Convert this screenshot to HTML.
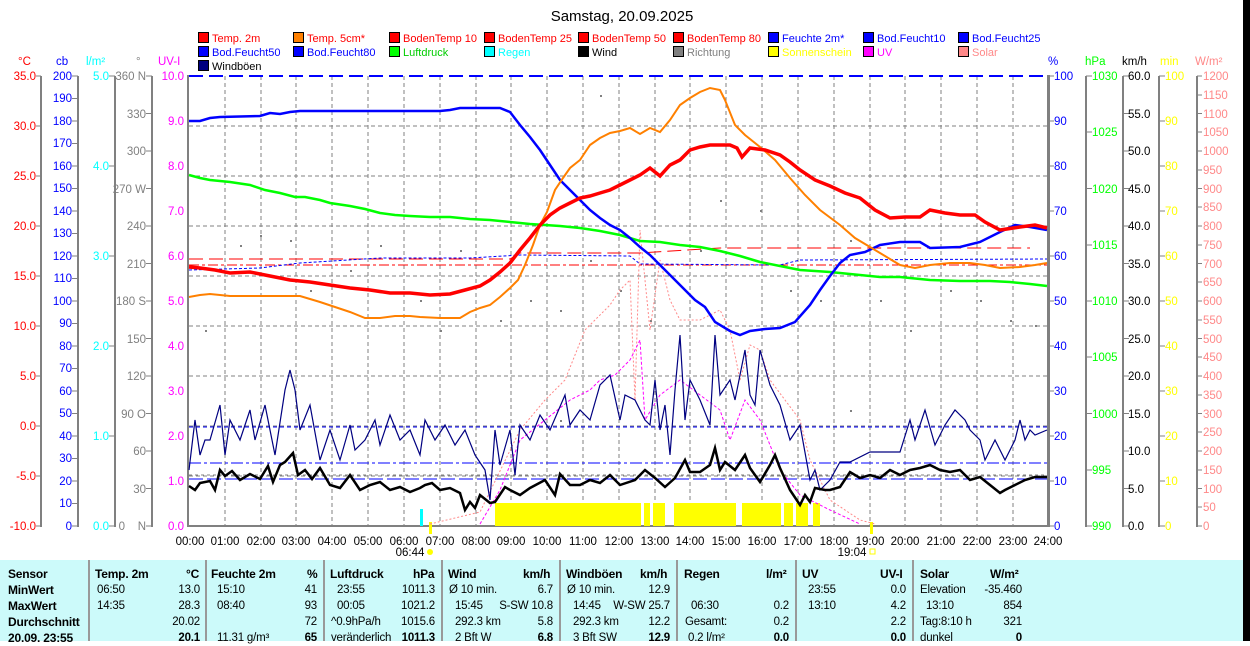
<!DOCTYPE html>
<html><head><meta charset="utf-8"><style>
body{margin:0;width:1250px;height:641px;background:#fff;overflow:hidden;font-family:"Liberation Sans",sans-serif}
svg{position:absolute;left:0;top:0}
svg text{font-family:"Liberation Sans",sans-serif;font-size:11.5px}
#tbl{position:absolute;left:0;top:560px;width:1243px;height:81px;background:#ccfafa}
#blk{position:absolute;left:1243px;top:0;width:7px;height:641px;background:#000}
.c{position:absolute;font-size:11.5px;letter-spacing:-0.2px;line-height:16px;color:#000;white-space:nowrap}
.b{font-weight:bold;font-size:12px}
.sep{position:absolute;top:0;width:2px;height:81px;background:#999}
.lg text{font-size:11px}
</style></head><body>
<svg width="1250" height="560" viewBox="0 0 1250 560">
<text x="622" y="21" text-anchor="middle" style="font-size:15px">Samstag, 20.09.2025</text>
<g class="lg">
<rect x="198.5" y="32.5" width="10" height="10" fill="#f00" stroke="#000"/><text x="212" y="42" fill="#f00">Temp. 2m</text>
<rect x="293.5" y="32.5" width="10" height="10" fill="#ff8000" stroke="#000"/><text x="307" y="42" fill="#f00">Temp. 5cm*</text>
<rect x="389.5" y="32.5" width="10" height="10" fill="#f00" stroke="#000"/><text x="403" y="42" fill="#f00">BodenTemp 10</text>
<rect x="484.5" y="32.5" width="10" height="10" fill="#f00" stroke="#000"/><text x="498" y="42" fill="#f00">BodenTemp 25</text>
<rect x="578.5" y="32.5" width="10" height="10" fill="#f00" stroke="#000"/><text x="592" y="42" fill="#f00">BodenTemp 50</text>
<rect x="673.5" y="32.5" width="10" height="10" fill="#f00" stroke="#000"/><text x="687" y="42" fill="#f00">BodenTemp 80</text>
<rect x="768.5" y="32.5" width="10" height="10" fill="#00f" stroke="#000"/><text x="782" y="42" fill="#00f">Feuchte 2m*</text>
<rect x="863.5" y="32.5" width="10" height="10" fill="#00f" stroke="#000"/><text x="877" y="42" fill="#00f">Bod.Feucht10</text>
<rect x="958.5" y="32.5" width="10" height="10" fill="#00f" stroke="#000"/><text x="972" y="42" fill="#00f">Bod.Feucht25</text>
<rect x="198.5" y="46.5" width="10" height="10" fill="#00f" stroke="#000"/><text x="212" y="56" fill="#00f">Bod.Feucht50</text>
<rect x="293.5" y="46.5" width="10" height="10" fill="#00f" stroke="#000"/><text x="307" y="56" fill="#00f">Bod.Feucht80</text>
<rect x="389.5" y="46.5" width="10" height="10" fill="#0f0" stroke="#000"/><text x="403" y="56" fill="#0c0">Luftdruck</text>
<rect x="484.5" y="46.5" width="10" height="10" fill="#0ff" stroke="#000"/><text x="498" y="56" fill="#0ff">Regen</text>
<rect x="578.5" y="46.5" width="10" height="10" fill="#000" stroke="#000"/><text x="592" y="56" fill="#000">Wind</text>
<rect x="673.5" y="46.5" width="10" height="10" fill="#808080" stroke="#000"/><text x="687" y="56" fill="#808080">Richtung</text>
<rect x="768.5" y="46.5" width="10" height="10" fill="#ff0" stroke="#000"/><text x="782" y="56" fill="#ff0">Sonnenschein</text>
<rect x="863.5" y="46.5" width="10" height="10" fill="#f0f" stroke="#000"/><text x="877" y="56" fill="#f0f">UV</text>
<rect x="958.5" y="46.5" width="10" height="10" fill="#f88" stroke="#000"/><text x="972" y="56" fill="#f88">Solar</text>
<rect x="198.5" y="60.5" width="10" height="10" fill="#000080" stroke="#000"/><text x="212" y="70" fill="#000">Windböen</text>
</g>
<text x="18" y="65" fill="#f00">°C</text><text x="56" y="65" fill="#00f">cb</text><text x="86" y="65" fill="#0ff">l/m²</text><text x="136" y="65" fill="#808080">°</text><text x="158" y="65" fill="#f0f">UV-I</text>
<text x="1048" y="65" fill="#00f">%</text><text x="1085" y="65" fill="#0f0">hPa</text><text x="1122" y="65" fill="#000">km/h</text><text x="1160" y="65" fill="#ff0">min</text><text x="1195" y="65" fill="#f88">W/m²</text>
<g stroke="#808080" stroke-width="2">
<line x1="41" y1="76" x2="41" y2="527"/><line x1="78" y1="76" x2="78" y2="527"/><line x1="115" y1="76" x2="115" y2="527"/><line x1="152" y1="76" x2="152" y2="527"/>
<line x1="1086" y1="76" x2="1086" y2="527"/><line x1="1123" y1="76" x2="1123" y2="527"/><line x1="1159" y1="76" x2="1159" y2="527"/><line x1="1197" y1="76" x2="1197" y2="527"/>
</g>
<rect x="187" y="75" width="2" height="452" fill="#808080"/><rect x="1047" y="75" width="3" height="452" fill="#808080"/>
<g stroke="#808080" stroke-dasharray="4,3" stroke-width="1">
<path d="M189 126H1047M189 176H1047M189 226H1047M189 276H1047M189 326H1047M189 376H1047M189 426H1047M189 476H1047"/>
<path d="M225 76V526M261 76V526M296 76V526M332 76V526M368 76V526M404 76V526M440 76V526M476 76V526M511 76V526M547 76V526M583 76V526M619 76V526M655 76V526M690 76V526M726 76V526M762 76V526M798 76V526M834 76V526M870 76V526M905 76V526M941 76V526M977 76V526M1013 76V526"/>
</g>
<line x1="189" y1="526" x2="1047" y2="526" stroke="#808080" stroke-width="2"/>
<line x1="189" y1="76" x2="1047" y2="76" stroke="#00f" stroke-width="2" stroke-dasharray="14,6"/>
<g fill="#f00" text-anchor="end">
<text x="36" y="80">35.0</text><text x="36" y="130">30.0</text><text x="36" y="180">25.0</text><text x="36" y="230">20.0</text><text x="36" y="280">15.0</text><text x="36" y="330">10.0</text><text x="36" y="380">5.0</text><text x="36" y="430">0.0</text><text x="36" y="480">-5.0</text><text x="36" y="530">-10.0</text>
</g>
<g stroke="#808080"><path d="M36 76h5M36 126h5M36 176h5M36 226h5M36 276h5M36 326h5M36 376h5M36 426h5M36 476h5M36 526h5"/>
<path d="M72 76h6M72 98.5h6M72 121h6M72 143.5h6M72 166h6M72 188.5h6M72 211h6M72 233.5h6M72 256h6M72 278.5h6M72 301h6M72 323.5h6M72 346h6M72 368.5h6M72 391h6M72 413.5h6M72 436h6M72 458.5h6M72 481h6M72 503.5h6M72 526h6"/>
<path d="M109 76h6M109 166h6M109 256h6M109 346h6M109 436h6M109 526h6"/>
<path d="M146 76h6M146 113.5h6M146 151h6M146 188.5h6M146 226h6M146 263.5h6M146 301h6M146 338.5h6M146 376h6M146 413.5h6M146 451h6M146 488.5h6M146 526h6"/>
<path d="M1049 76h5M1049 121h5M1049 166h5M1049 211h5M1049 256h5M1049 301h5M1049 346h5M1049 391h5M1049 436h5M1049 481h5M1049 526h5"/>
<path d="M1086 76h6M1086 132h6M1086 188.5h6M1086 245h6M1086 301h6M1086 357h6M1086 413.5h6M1086 470h6M1086 526h6"/>
<path d="M1123 76h6M1123 113.5h6M1123 151h6M1123 188.5h6M1123 226h6M1123 263.5h6M1123 301h6M1123 338.5h6M1123 376h6M1123 413.5h6M1123 451h6M1123 488.5h6M1123 526h6"/>
<path d="M1159 76h6M1159 121h6M1159 166h6M1159 211h6M1159 256h6M1159 301h6M1159 346h6M1159 391h6M1159 436h6M1159 481h6M1159 526h6"/>
</g>
<g fill="#00f" text-anchor="end">
<text x="72" y="80">200</text><text x="72" y="102">190</text><text x="72" y="125">180</text><text x="72" y="147">170</text><text x="72" y="170">160</text><text x="72" y="192">150</text><text x="72" y="215">140</text><text x="72" y="237">130</text><text x="72" y="260">120</text><text x="72" y="282">110</text><text x="72" y="305">100</text><text x="72" y="327">90</text><text x="72" y="350">80</text><text x="72" y="372">70</text><text x="72" y="395">60</text><text x="72" y="417">50</text><text x="72" y="440">40</text><text x="72" y="462">30</text><text x="72" y="485">20</text><text x="72" y="507">10</text><text x="72" y="530">0</text>
</g>
<g fill="#0ff" text-anchor="end"><text x="109" y="80">5.0</text><text x="109" y="170">4.0</text><text x="109" y="260">3.0</text><text x="109" y="350">2.0</text><text x="109" y="440">1.0</text><text x="109" y="530">0.0</text></g>
<g fill="#808080" text-anchor="end">
<text x="146" y="80">360 N</text><text x="146" y="118">330</text><text x="146" y="155">300</text><text x="146" y="193">270 W</text><text x="146" y="230">240</text><text x="146" y="268">210</text><text x="146" y="305">180 S</text><text x="146" y="343">150</text><text x="146" y="380">120</text><text x="146" y="418">90 O</text><text x="146" y="455">60</text><text x="146" y="493">30</text><text x="146" y="530">N</text>
<text x="125" y="530">0</text>
</g>
<g fill="#f0f" text-anchor="end">
<text x="184" y="80">10.0</text><text x="184" y="125">9.0</text><text x="184" y="170">8.0</text><text x="184" y="215">7.0</text><text x="184" y="260">6.0</text><text x="184" y="305">5.0</text><text x="184" y="350">4.0</text><text x="184" y="395">3.0</text><text x="184" y="440">2.0</text><text x="184" y="485">1.0</text><text x="184" y="530">0.0</text>
</g>
<g fill="#00f"><text x="1054" y="80">100</text><text x="1054" y="125">90</text><text x="1054" y="170">80</text><text x="1054" y="215">70</text><text x="1054" y="260">60</text><text x="1054" y="305">50</text><text x="1054" y="350">40</text><text x="1054" y="395">30</text><text x="1054" y="440">20</text><text x="1054" y="485">10</text><text x="1054" y="530">0</text></g>
<g fill="#0f0"><text x="1092" y="80">1030</text><text x="1092" y="136">1025</text><text x="1092" y="193">1020</text><text x="1092" y="249">1015</text><text x="1092" y="305">1010</text><text x="1092" y="361">1005</text><text x="1092" y="418">1000</text><text x="1092" y="474">995</text><text x="1092" y="530">990</text></g>
<g fill="#000"><text x="1128" y="80">60.0</text><text x="1128" y="118">55.0</text><text x="1128" y="155">50.0</text><text x="1128" y="193">45.0</text><text x="1128" y="230">40.0</text><text x="1128" y="268">35.0</text><text x="1128" y="305">30.0</text><text x="1128" y="343">25.0</text><text x="1128" y="380">20.0</text><text x="1128" y="418">15.0</text><text x="1128" y="455">10.0</text><text x="1128" y="493">5.0</text><text x="1128" y="530">0.0</text></g>
<g fill="#ff0"><text x="1165" y="80">100</text><text x="1165" y="125">90</text><text x="1165" y="170">80</text><text x="1165" y="215">70</text><text x="1165" y="260">60</text><text x="1165" y="305">50</text><text x="1165" y="350">40</text><text x="1165" y="395">30</text><text x="1165" y="440">20</text><text x="1165" y="485">10</text><text x="1165" y="530">0</text></g>
<g fill="#f88">
<text x="1203" y="80">1200</text><text x="1203" y="99">1150</text><text x="1203" y="118">1100</text><text x="1203" y="136">1050</text><text x="1203" y="155">1000</text><text x="1203" y="174">950</text><text x="1203" y="193">900</text><text x="1203" y="211">850</text><text x="1203" y="230">800</text><text x="1203" y="249">750</text><text x="1203" y="268">700</text><text x="1203" y="286">650</text><text x="1203" y="305">600</text><text x="1203" y="324">550</text><text x="1203" y="343">500</text><text x="1203" y="361">450</text><text x="1203" y="380">400</text><text x="1203" y="399">350</text><text x="1203" y="418">300</text><text x="1203" y="436">250</text><text x="1203" y="455">200</text><text x="1203" y="474">150</text><text x="1203" y="493">100</text><text x="1203" y="511">50</text><text x="1203" y="530">0</text>
</g>
<g stroke="#808080"><path d="M1197 76h5M1197 95h5M1197 113.5h5M1197 132h5M1197 151h5M1197 170h5M1197 188.5h5M1197 207h5M1197 226h5M1197 245h5M1197 263.5h5M1197 282h5M1197 301h5M1197 320h5M1197 338.5h5M1197 357h5M1197 376h5M1197 395h5M1197 413.5h5M1197 432h5M1197 451h5M1197 470h5M1197 488.5h5M1197 507h5M1197 526h5"/></g>
<g fill="#ff0"><rect x="495" y="503" width="146" height="23"/><rect x="644" y="503" width="6" height="23"/><rect x="653" y="503" width="12" height="23"/><rect x="674" y="503" width="62" height="23"/><rect x="742" y="503" width="39" height="23"/><rect x="784" y="503" width="9" height="23"/><rect x="796" y="503" width="12" height="23"/><rect x="813" y="503" width="7" height="23"/>
<rect x="429" y="522" width="3" height="12"/><rect x="870" y="522" width="3" height="12"/></g>
<rect x="420" y="509" width="3" height="17" fill="#0ff"/>
<g fill="#808080">
<rect x="205" y="330" width="2" height="2"/><rect x="240" y="245" width="2" height="2"/><rect x="260" y="235" width="2" height="2"/><rect x="290" y="240" width="2" height="2"/><rect x="310" y="290" width="2" height="2"/><rect x="350" y="270" width="2" height="2"/><rect x="380" y="245" width="2" height="2"/><rect x="420" y="300" width="2" height="2"/><rect x="460" y="250" width="2" height="2"/><rect x="500" y="320" width="2" height="2"/><rect x="530" y="300" width="2" height="2"/><rect x="560" y="310" width="2" height="2"/><rect x="590" y="260" width="2" height="2"/><rect x="600" y="95" width="2" height="2"/><rect x="620" y="290" width="2" height="2"/><rect x="650" y="320" width="2" height="2"/><rect x="700" y="250" width="2" height="2"/><rect x="720" y="200" width="2" height="2"/><rect x="760" y="210" width="2" height="2"/><rect x="790" y="290" width="2" height="2"/><rect x="820" y="300" width="2" height="2"/><rect x="850" y="240" width="2" height="2"/><rect x="880" y="300" width="2" height="2"/><rect x="910" y="330" width="2" height="2"/><rect x="950" y="290" width="2" height="2"/><rect x="980" y="300" width="2" height="2"/><rect x="1010" y="320" width="2" height="2"/><rect x="1035" y="325" width="2" height="2"/><rect x="850" y="410" width="2" height="2"/><rect x="440" y="330" width="2" height="2"/><rect x="560" y="420" width="2" height="2"/>
</g>
<path d="M189 427H1047" stroke="#00f" stroke-dasharray="4,3"/>
<path d="M189 463H1047" stroke="#00f" stroke-dasharray="12,3,3,3"/>
<path d="M189 479H1047" stroke="#00f" stroke-dasharray="14,4"/>
<path d="M189 475H1047" stroke="#808080" stroke-dasharray="3,3"/>
<path d="M189 259H510L520 253H640L720 248H1030" stroke="#f00" stroke-dasharray="14,6" fill="none"/>
<path d="M189 265H1047" stroke="#f00" stroke-dasharray="10,3,3,3"/>
<path d="M189 270L260 268L300 263L380 258L470 258L520 255L630 256L640 264L780 265L800 260L1047 259" stroke="#00f" stroke-dasharray="3,2" fill="none"/>
<polyline fill="none" stroke="#f88" stroke-dasharray="2,2" points="430,524 480,512 520,430 545,400 565,380 585,330 610,305 620,290 630,280 635,400 640,230 650,330 660,260 670,300 680,320 700,320 720,310 730,330 740,380 750,345 760,350 770,380 785,400 800,420 810,460 830,500 860,520 875,524"/>
<polyline fill="none" stroke="#f0f" stroke-dasharray="3,2" points="480,524 500,490 520,440 545,420 570,400 590,390 600,380 615,375 630,360 640,340 645,420 660,395 680,380 720,410 730,440 745,400 760,420 780,470 800,495 830,510 860,524"/>
<polyline fill="none" stroke="#000080" stroke-width="1.2" points="189,470 195,420 200,455 205,440 210,440 220,405 225,455 230,420 240,440 250,410 255,440 265,405 275,455 285,390 290,370 295,390 300,430 310,405 320,460 330,430 340,460 350,425 355,450 365,440 375,420 380,445 390,415 400,440 410,430 420,455 425,420 435,440 445,425 455,445 465,430 475,455 485,470 490,500 495,430 500,465 510,430 515,475 520,425 530,440 540,415 550,430 565,395 570,425 580,410 590,420 600,385 610,375 620,420 625,395 635,400 645,420 650,425 655,380 660,430 665,405 670,455 675,390 680,335 685,420 690,380 700,400 710,425 715,335 720,395 730,380 735,400 745,350 750,395 755,405 760,350 770,385 780,405 790,440 800,425 810,480 815,470 820,490 830,480 840,462 850,462 870,452 900,452 910,420 915,440 925,410 935,445 945,425 955,410 965,420 970,430 980,440 985,460 995,440 1005,460 1015,440 1020,420 1025,440 1030,430 1035,435 1047,430"/>
<polyline fill="none" stroke="#000" stroke-width="2.5" points="189,486 195,490 200,483 210,481 215,490 220,470 225,476 232,471 240,480 250,474 260,479 268,466 273,482 280,465 285,462 293,453 298,475 305,470 312,479 320,468 330,485 340,488 350,475 360,490 370,485 380,482 390,490 400,487 410,492 420,488 425,485 432,483 440,490 450,488 460,493 465,510 470,502 475,508 480,495 490,503 495,502 505,487 510,490 520,495 530,488 545,480 555,495 560,474 570,485 580,485 590,480 600,483 610,475 620,485 635,480 645,470 655,478 665,487 675,478 685,460 690,472 700,472 710,465 715,448 720,470 725,462 735,470 745,455 750,468 755,475 760,482 770,465 775,455 780,468 790,490 800,505 805,495 810,502 815,488 825,490 830,490 840,487 850,472 860,478 870,475 880,478 890,470 900,475 910,470 920,468 930,465 940,470 950,472 960,470 970,480 980,477 990,485 1000,493 1005,490 1015,485 1025,480 1035,477 1047,477"/>
<polyline fill="none" stroke="#0f0" stroke-width="2.5" points="189,175 200,178 210,180 230,182 250,185 265,190 280,193 295,197 305,197 320,200 330,203 350,206 365,209 380,213 395,215 410,216 430,217 450,217 470,219 490,220 510,222 530,224 560,226 580,228 600,231 620,235 640,241 660,242 680,245 700,247 720,251 740,256 760,262 780,266 800,270 830,272 860,275 880,277 900,277 930,280 960,281 990,281 1010,282 1030,284 1047,286"/>
<polyline fill="none" stroke="#00f" stroke-width="2.5" points="189,121 200,121 210,118 220,117 260,116 270,113 280,114 290,112 300,111 320,111 390,111 440,111 450,110 460,108 500,108 510,112 520,125 530,137 540,150 550,165 560,180 570,190 580,200 590,210 600,218 610,225 620,230 630,238 640,247 650,255 660,265 670,275 680,285 695,300 705,307 715,322 730,331 740,335 750,331 765,329 780,328 795,322 810,305 820,290 830,276 840,263 850,255 865,252 880,245 900,242 920,242 930,248 960,247 980,242 1000,232 1015,225 1030,227 1047,230"/>
<polyline fill="none" stroke="#ff8000" stroke-width="2" points="189,297 200,295 210,294 230,296 260,296 280,296 300,296 310,299 320,302 335,307 350,312 365,318 380,318 395,316 410,316 420,317 440,318 460,318 470,312 480,308 490,305 500,297 510,288 518,280 525,265 533,245 540,225 547,212 555,190 563,178 570,168 580,160 590,145 600,138 610,133 620,131 630,128 640,134 650,128 660,132 670,120 680,105 690,98 700,92 710,88 720,90 725,100 735,125 745,135 760,147 775,160 790,178 805,195 820,210 840,225 855,238 870,247 885,256 900,265 915,268 930,265 950,263 970,263 985,265 1000,268 1020,267 1035,265 1047,263"/>
<polyline fill="none" stroke="#f00" stroke-width="3.5" points="189,267 200,268 215,270 230,273 250,272 270,276 290,280 310,282 330,285 350,288 370,290 390,293 410,293 430,295 450,294 465,290 480,286 490,280 500,272 510,263 520,250 530,238 540,225 550,215 560,208 570,203 580,198 590,196 600,193 610,190 620,185 630,180 640,175 650,168 660,176 670,165 680,160 690,150 700,147 710,145 730,145 737,148 742,157 750,148 765,150 780,155 790,162 800,170 815,180 830,186 845,193 860,198 875,210 890,218 905,217 920,217 930,210 945,213 960,215 975,215 985,222 1000,230 1020,227 1035,225 1047,228"/>
<g text-anchor="middle" fill="#000">
<text x="190" y="545">00:00</text><text x="225" y="545">01:00</text><text x="261" y="545">02:00</text><text x="296" y="545">03:00</text><text x="332" y="545">04:00</text><text x="368" y="545">05:00</text><text x="404" y="545">06:00</text><text x="440" y="545">07:00</text><text x="476" y="545">08:00</text><text x="511" y="545">09:00</text><text x="547" y="545">10:00</text><text x="583" y="545">11:00</text><text x="619" y="545">12:00</text><text x="655" y="545">13:00</text><text x="690" y="545">14:00</text><text x="726" y="545">15:00</text><text x="762" y="545">16:00</text><text x="798" y="545">17:00</text><text x="834" y="545">18:00</text><text x="870" y="545">19:00</text><text x="905" y="545">20:00</text><text x="941" y="545">21:00</text><text x="977" y="545">22:00</text><text x="1013" y="545">23:00</text><text x="1048" y="545">24:00</text>
<text x="410" y="556">06:44</text><text x="852" y="556">19:04</text>
</g>
<circle cx="430" cy="552" r="3" fill="#ff0"/><rect x="870" y="549" width="5" height="5" fill="none" stroke="#ff0"/>
</svg>
<div id="tbl">
<div class="sep" style="left:88px"></div><div class="sep" style="left:205px"></div><div class="sep" style="left:323px"></div><div class="sep" style="left:441px"></div><div class="sep" style="left:559px"></div><div class="sep" style="left:676px"></div><div class="sep" style="left:795px"></div><div class="sep" style="left:912px"></div>
<div class="c b" style="left:8px;top:6px">Sensor<br>MinWert<br>MaxWert<br>Durchschnitt<br>20.09. 23:55</div>
<div class="c b" style="left:95px;top:6px">Temp. 2m</div><div class="c b" style="left:186px;top:6px">°C</div>
<div class="c" style="left:97px;top:22px">06:50<br>14:35</div>
<div class="c" style="left:160px;top:22px;text-align:right;width:40px">13.0<br>28.3<br>20.02<br><b>20.1</b></div>
<div class="c b" style="left:211px;top:6px">Feuchte 2m</div><div class="c b" style="left:307px;top:6px">%</div>
<div class="c" style="left:217px;top:22px">15:10<br>08:40<br><br>11.31 g/m³</div>
<div class="c" style="left:280px;top:22px;text-align:right;width:37px">41<br>93<br>72<br><b>65</b></div>
<div class="c b" style="left:330px;top:6px">Luftdruck</div><div class="c b" style="left:413px;top:6px">hPa</div>
<div class="c" style="left:331px;top:22px">&nbsp;&nbsp;23:55<br>&nbsp;&nbsp;00:05<br>^0.9hPa/h<br>veränderlich</div>
<div class="c" style="left:390px;top:22px;text-align:right;width:45px">1011.3<br>1021.2<br>1015.6<br><b>1011.3</b></div>
<div class="c b" style="left:448px;top:6px">Wind</div><div class="c b" style="left:523px;top:6px">km/h</div>
<div class="c" style="left:449px;top:22px">Ø 10 min.<br>&nbsp;&nbsp;15:45<br>&nbsp;&nbsp;292.3 km<br>&nbsp;&nbsp;2 Bft W</div>
<div class="c" style="left:490px;top:22px;text-align:right;width:63px">6.7<br>S-SW 10.8<br>5.8<br><b>6.8</b></div>
<div class="c b" style="left:566px;top:6px">Windböen</div><div class="c b" style="left:640px;top:6px">km/h</div>
<div class="c" style="left:567px;top:22px">Ø 10 min.<br>&nbsp;&nbsp;14:45<br>&nbsp;&nbsp;292.3 km<br>&nbsp;&nbsp;3 Bft SW</div>
<div class="c" style="left:605px;top:22px;text-align:right;width:65px">12.9<br>W-SW 25.7<br>12.2<br><b>12.9</b></div>
<div class="c b" style="left:684px;top:6px">Regen</div><div class="c b" style="left:766px;top:6px">l/m²</div>
<div class="c" style="left:685px;top:22px"><br>&nbsp;&nbsp;06:30<br>Gesamt:<br>&nbsp;0.2 l/m²</div>
<div class="c" style="left:750px;top:22px;text-align:right;width:39px"><br>0.2<br>0.2<br><b>0.0</b></div>
<div class="c b" style="left:802px;top:6px">UV</div><div class="c b" style="left:880px;top:6px">UV-I</div>
<div class="c" style="left:808px;top:22px">23:55<br>13:10</div>
<div class="c" style="left:860px;top:22px;text-align:right;width:46px">0.0<br>4.2<br>2.2<br><b>0.0</b></div>
<div class="c b" style="left:920px;top:6px">Solar</div><div class="c b" style="left:990px;top:6px">W/m²</div>
<div class="c" style="left:920px;top:22px">Elevation<br>&nbsp;&nbsp;13:10<br>Tag:8:10 h<br>dunkel</div>
<div class="c" style="left:970px;top:22px;text-align:right;width:52px">-35.460<br>854<br>321<br><b>0</b></div>
</div>
<div id="blk"></div>
</body></html>
